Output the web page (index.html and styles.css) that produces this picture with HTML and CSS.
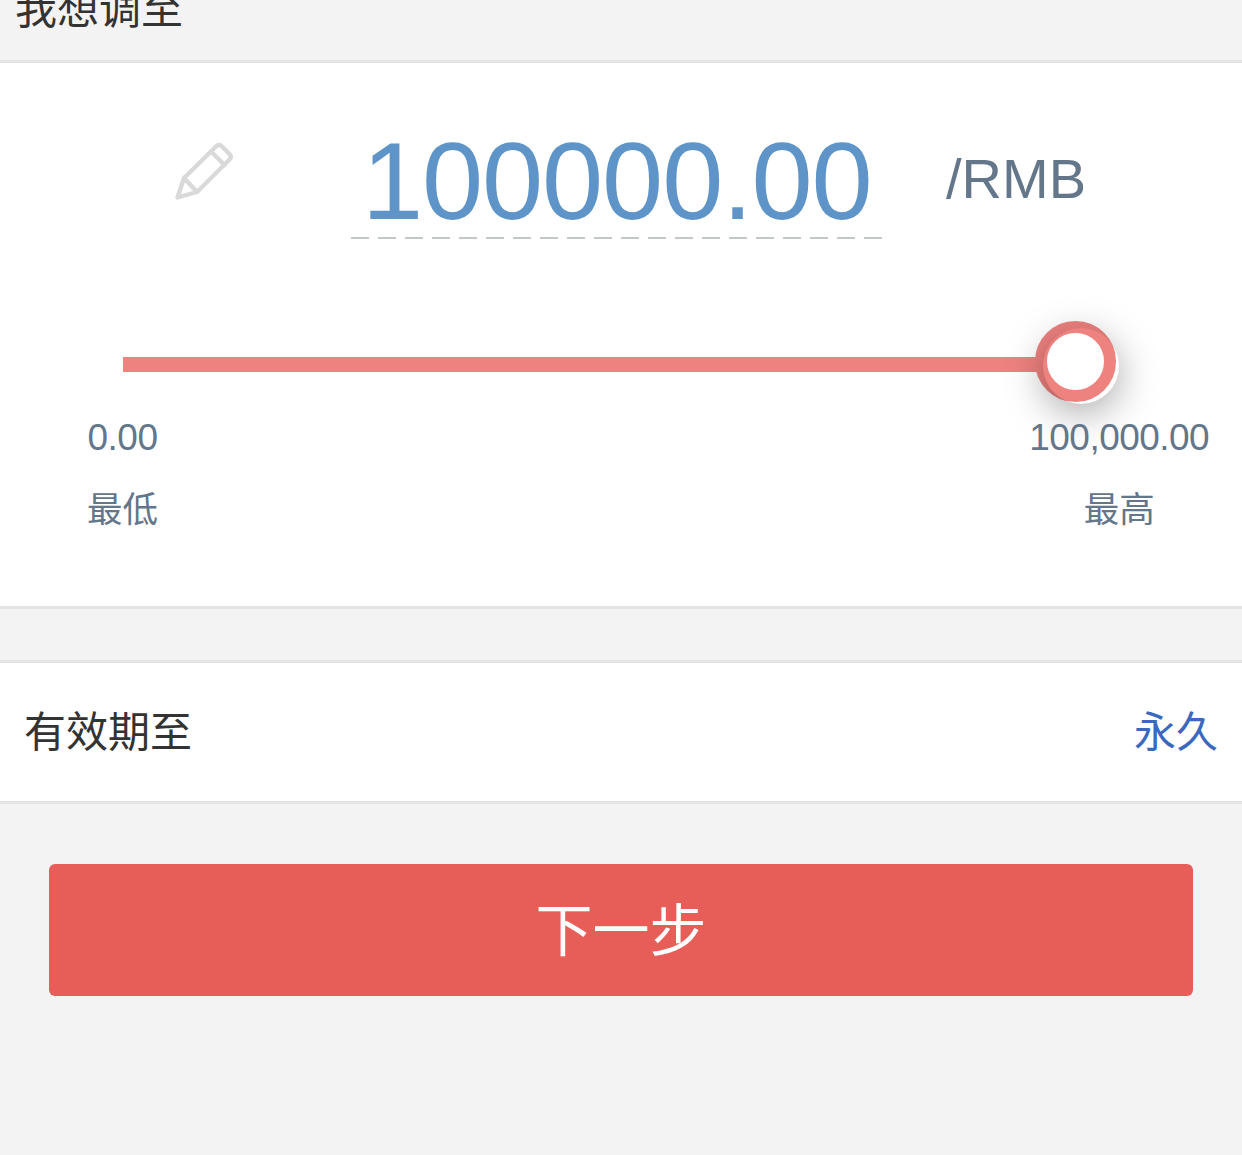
FILE: index.html
```html
<!DOCTYPE html>
<html lang="zh-CN">
<head>
<meta charset="utf-8">
<title>调整限额</title>
<link rel="stylesheet" href="styles.css">
</head>
<body>
<header class="section-title"><h2>我想调至</h2></header>
<main>
  <section class="limit-panel">
    <div class="amount-row">
      <svg class="pencil" viewBox="0 0 60 60" fill="none" stroke="#d9d9d9" stroke-width="4.4" stroke-linejoin="round" stroke-linecap="round">
        <path d="M3.5 56.5L10 37L42 5.5Q45 2.500 48 5.500L55.500 13Q58 16 55.500 18.500L23 51Z"/>
        <path d="M37 10.500L50.500 24M10 37L23 51"/>
      </svg>
      <div class="amount">100000.00</div>
      <span class="currency">/RMB</span>
    </div>
    <div class="slider">
      <div class="track"></div>
      <div class="knob"></div>
    </div>
    <div class="bounds">
      <div class="bound"><span class="bound-value">0.00</span><span class="bound-label">最低</span></div>
      <div class="bound"><span class="bound-value">100,000.00</span><span class="bound-label">最高</span></div>
    </div>
  </section>
  <section class="expiry-row">
    <span>有效期至</span>
    <span class="expiry-value">永久</span>
  </section>
  <button class="next" type="button">下一步</button>
</main>
</body>
</html>
```
FILE: styles.css
```css
* {
  box-sizing: border-box;
}

body {
  margin: 0;
  min-height: 1155px;
  background: #f3f3f3;
  color: #333;
  font-family: "Liberation Sans", "Noto Sans CJK SC", sans-serif;
  overflow: hidden;
}

.section-title {
  display: flex;
  align-items: flex-end;
  height: 60px;
  padding: 0 15px 29px;
}

.section-title h2 {
  margin: 0;
  font-size: 42px;
  font-weight: 400;
  line-height: 42px;
}

.limit-panel {
  height: 549px;
  padding-top: 67px;
  background: #fff;
  border-top: 3px solid #e4e4e4;
  border-bottom: 3px solid #e4e4e4;
}

.amount-row {
  display: flex;
  height: 109px;
  padding-left: 174px;
}

.pencil {
  width: 60px;
  height: 60px;
  margin-top: 11px;
}

.amount {
  width: 531px;
  margin-left: 117px;
  padding-left: 11px;
  color: #5e94c7;
  font-size: 110px;
  letter-spacing: -1.15px;
  line-height: 102px;
  white-space: nowrap;
  background: repeating-linear-gradient(90deg, #c2c7ca 0 18px, transparent 18px 27px) 0 107px / 100% 2px no-repeat;
}

.currency {
  margin-left: 64px;
  color: #64768a;
  font-size: 56px;
  line-height: 98px;
}

.slider {
  display: flex;
  align-items: center;
  height: 81px;
  margin: 82px 0 0 123px;
}

.track {
  width: 914px;
  height: 15px;
  margin-top: 5px;
  background: #ee827f;
}

.knob {
  position: relative;
  width: 81px;
  height: 81px;
  margin-left: -2px;
  border: 12px solid #ee827f;
  border-radius: 50%;
  background: #fff;
}

.knob::before,
.knob::after {
  content: "";
  position: absolute;
  top: -5px;
  left: -4px;
  width: 76px;
  height: 76px;
  border-radius: 50%;
}

.knob::before {
  z-index: -1;
  background: #fff;
}

.knob::after {
  box-shadow: 0 9px 39px rgba(0, 0, 0, 0.35);
}

.bounds {
  position: relative;
  display: flex;
  justify-content: space-between;
  padding: 15px 33px 0 87px;
  color: #64768a;
}

.bound {
  display: flex;
  flex-direction: column;
  align-items: center;
}

.bound-value {
  font-size: 37px;
  letter-spacing: -0.55px;
  line-height: 42px;
}

.bound-label {
  margin-top: 27px;
  font-size: 35.5px;
  line-height: 48px;
}

.expiry-row {
  display: flex;
  align-items: center;
  justify-content: space-between;
  height: 144px;
  margin-top: 51px;
  padding: 0 24px 8px 24px;
  background: #fff;
  border-top: 3px solid #e4e4e4;
  border-bottom: 3px solid #e4e4e4;
  font-size: 42px;
}

.expiry-value {
  color: #3a69bd;
}

.next {
  display: block;
  width: 1144px;
  height: 132px;
  margin: 60px auto 0;
  padding: 0 0 8px;
  border: 0;
  border-radius: 6px;
  background: #e75e59;
  color: #fff;
  font-family: inherit;
  font-size: 57px;
}
```
